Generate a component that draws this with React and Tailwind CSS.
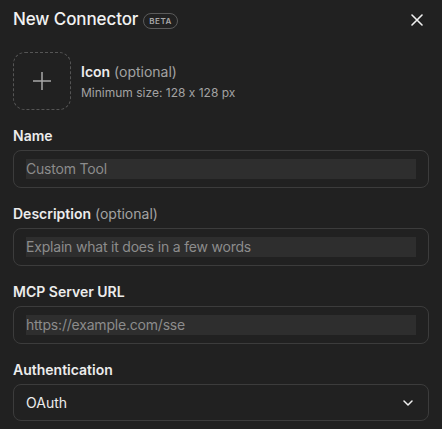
export default function App() {
  const font = { fontFamily: 'Inter, "Noto Sans", sans-serif', fontFeatureSettings: '"calt" 0' };
  const Field = ({ label, optional, placeholder }) => (
    <div className="mt-4">
      <div className="h-5 text-[14px] leading-5 font-semibold text-[#ececec] mb-1">
        {label}
        {optional && <span className="font-normal text-[#a3a3a3]"> (optional)</span>}
      </div>
      <div className="h-[38px] rounded-[8px] border border-[#3c3c3c] flex items-center px-3">
        <div className="h-5 flex-1 bg-[#2e2e2e] text-[14px] leading-5 tracking-[-0.2px] text-[#8c8c8c]">{placeholder}</div>
      </div>
    </div>
  );
  return (
    <div className="w-[442px] h-[429px] bg-[#212121] px-[13px] overflow-hidden" style={font}>
      <div className="h-10 flex items-center justify-between">
        <div className="flex items-center gap-[5px]">
          <span className="text-[17px] font-medium text-[#f2f2f2] tracking-[-0.1px]">New Connector</span>
          <span className="h-4 px-[5px] rounded-full border border-[#5a5a5a] text-[8px] font-semibold tracking-[0.5px] text-[#a8a8a8] flex items-center mt-[1px]">BETA</span>
        </div>
        <svg width="12" height="12" viewBox="0 0 12 12" className="mr-[6px]">
          <path d="M1 1L11 11M11 1L1 11" stroke="#f0f0f0" strokeWidth="1.6" strokeLinecap="round" />
        </svg>
      </div>
      <div className="mt-3 flex items-center gap-[10px]">
        <div className="w-[58px] h-[58px] rounded-[12px] border border-dashed border-[#555] flex items-center justify-center">
          <svg width="18" height="18" viewBox="0 0 18 18">
            <path d="M9 0V18M0 9H18" stroke="#a8a8a8" strokeWidth="1.5" />
          </svg>
        </div>
        <div className="flex flex-col gap-[3px]">
          <div className="text-[14px] leading-5 font-semibold text-[#ececec]">
            Icon<span className="font-normal text-[#a3a3a3]"> (optional)</span>
          </div>
          <div className="text-[12px] leading-4 text-[#a3a3a3]">Minimum size: 128 x 128 px</div>
        </div>
      </div>
      <Field label="Name" placeholder="Custom Tool" />
      <Field label="Description" optional placeholder="Explain what it does in a few words" />
      <Field label="MCP Server URL" placeholder="https://example.com/sse" />
      <div className="mt-4">
        <div className="h-5 text-[14px] leading-5 font-semibold text-[#ececec] mb-1">Authentication</div>
        <div className="h-[37px] rounded-[8px] border border-[#3c3c3c] flex items-center justify-between pl-3 pr-[15px]">
          <span className="text-[14px] text-[#ececec]">OAuth</span>
          <svg width="10" height="6" viewBox="0 0 10 6">
            <path d="M1 1L5 5L9 1" stroke="#f0f0f0" strokeWidth="1.5" fill="none" strokeLinecap="round" strokeLinejoin="round" />
          </svg>
        </div>
      </div>
    </div>
  );
}
